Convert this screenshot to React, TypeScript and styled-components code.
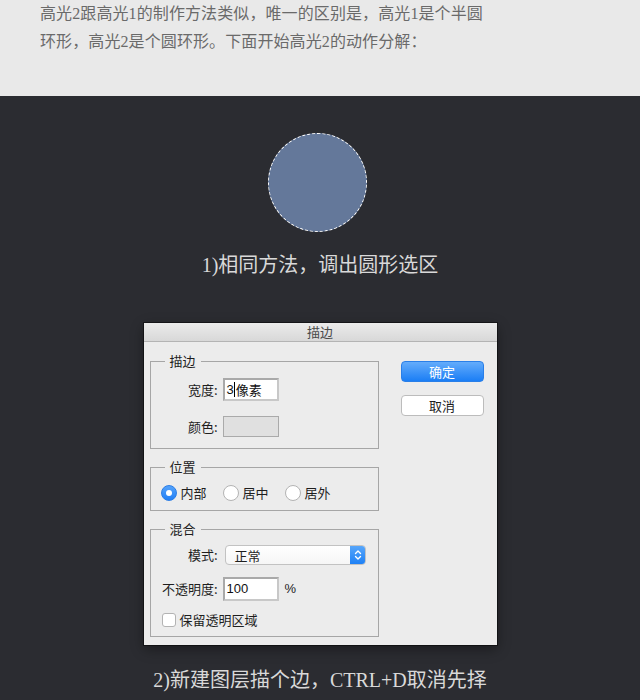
import React from 'react';
import styled, { createGlobalStyle } from 'styled-components';

const GlobalStyle = createGlobalStyle`
  html, body {
    margin: 0;
    padding: 0;
    background: #2b2c31;
  }
  * {
    box-sizing: border-box;
  }
`;

const Page = styled.div`
  width: 640px;
  height: 700px;
  overflow: hidden;
  display: flex;
  flex-direction: column;
`;

const Intro = styled.div`
  height: 96px;
  background: #e9e9e9;
  padding-left: 40px;
  font-family: 'Liberation Serif', 'Noto Sans CJK SC', serif;
  font-size: 16px;
  line-height: 28px;
  color: #6a6a6a;
  letter-spacing: 0.1px;
`;

const IntroLine = styled.div`
  white-space: nowrap;
`;

const Stage = styled.div`
  flex: 1;
  background: #2b2c31;
  display: flex;
  flex-direction: column;
  align-items: center;
  padding-top: 37px;
`;

const Selection = styled.div`
  width: 99px;
  height: 99px;
  border-radius: 50%;
  background: #64789a;
  border: 1px dashed #ffffff;
  margin-left: -5px;
`;

const Caption = styled.div<{ $top: number }>`
  margin-top: ${(p) => p.$top}px;
  font-family: 'Liberation Serif', 'Noto Sans CJK SC', serif;
  font-size: 20px;
  line-height: 24px;
  color: #d9d9d9;
  white-space: nowrap;
`;

const Dialog = styled.div`
  margin-top: 46px;
  width: 353px;
  height: 322px;
  background: #ececec;
  box-shadow: 0 0 0 1px rgba(0, 0, 0, 0.45), 0 4px 12px rgba(0, 0, 0, 0.4);
  font-family: 'Noto Sans CJK SC', 'Liberation Sans', sans-serif;
  font-size: 13px;
  line-height: 16px;
  color: #1e1e1e;
  display: flex;
  flex-direction: column;
`;

const TitleBar = styled.div`
  height: 19px;
  background: linear-gradient(#ebebeb, #d8d8d8);
  border-bottom: 1px solid #b4b4b4;
  text-align: center;
  font-size: 13px;
  line-height: 18px;
  color: #4a4a4a;
`;

const Body = styled.div`
  display: flex;
  padding: 11px 13px 0 6px;
  gap: 22px;
`;

const Groups = styled.div`
  width: 229px;
  display: flex;
  flex-direction: column;
  gap: 10px;
`;

const Group = styled.fieldset<{ $pt: number; $pb: number; $gap: number }>`
  margin: 0;
  border: 1px solid #a6a6a6;
  padding: ${(p) => p.$pt}px 0 ${(p) => p.$pb}px 0;
  display: flex;
  flex-direction: column;
  gap: ${(p) => p.$gap}px;
`;

const Legend = styled.legend`
  margin-left: 14px;
  padding: 0 5px;
  font-size: 13px;
  line-height: 16px;
`;

const Row = styled.div<{ $indent?: number }>`
  display: flex;
  align-items: center;
  padding-left: ${(p) => p.$indent ?? 0}px;
`;

const CheckRow = styled.label`
  display: flex;
  align-items: center;
  height: 14px;
  line-height: 14px;
  padding-left: 11px;
`;

const Label = styled.span`
  width: 67px;
  margin-right: 5px;
  text-align: right;
  white-space: nowrap;
`;

const TextBox = styled.div<{ $h: number }>`
  width: 56px;
  height: ${(p) => p.$h}px;
  background: #ffffff;
  border: 2px solid #a9a9a9;
  border-right-color: #c8c8c8;
  border-bottom-color: #c8c8c8;
  padding-left: 2px;
  display: flex;
  align-items: center;
  font-family: 'Liberation Sans', 'Noto Sans CJK SC', sans-serif;
  font-size: 13px;
  color: #111;
  white-space: nowrap;
`;

const Caret = styled.span`
  display: inline-block;
  width: 1px;
  height: 15px;
  background: #000;
  margin: 0 1px 0 0;
`;

const CjkText = styled.span`
  font-family: 'Noto Sans CJK SC', sans-serif;
`;

const Swatch = styled.div`
  width: 56px;
  height: 21px;
  background: #e0e0e0;
  border: 1px solid #aaaaaa;
`;

const RadioItem = styled.label`
  width: 62px;
  display: flex;
  align-items: center;
  gap: 4px;
`;

const RadioDot = styled.span<{ $on?: boolean }>`
  width: 16px;
  height: 16px;
  border-radius: 50%;
  display: flex;
  align-items: center;
  justify-content: center;
  background: ${(p) => (p.$on ? 'linear-gradient(#55a3fb, #2180f6)' : '#ffffff')};
  border: 1px solid ${(p) => (p.$on ? '#2a7de6' : '#b3b3b3')};
  &::after {
    content: '';
    display: ${(p) => (p.$on ? 'block' : 'none')};
    width: 6px;
    height: 6px;
    border-radius: 50%;
    background: #ffffff;
  }
`;

const Select = styled.div`
  margin-left: 2px;
  width: 141px;
  height: 20px;
  border: 1px solid #c2c2c2;
  border-radius: 4px;
  background: linear-gradient(#ffffff, #f6f6f6);
  display: flex;
  align-items: center;
  justify-content: space-between;
  padding-left: 9px;
  padding-top: 1px;
  overflow: hidden;
`;

const Stepper = styled.div`
  width: 16px;
  height: 20px;
  margin: -1px -1px 0 0;
  background: linear-gradient(#5aa8fb, #1c7ff5);
  border-radius: 0 4px 4px 0;
  display: flex;
  align-items: center;
  justify-content: center;
`;

const Percent = styled.span`
  margin-left: 6px;
  font-family: 'Liberation Sans', sans-serif;
`;

const Check = styled.span`
  width: 14px;
  height: 14px;
  border: 1px solid #b3b3b3;
  border-radius: 3px;
  background: #ffffff;
  margin-right: 4px;
`;

const Buttons = styled.div`
  display: flex;
  flex-direction: column;
  gap: 13px;
  padding-top: 8px;
`;

const Button = styled.div<{ $primary?: boolean }>`
  width: 83px;
  height: 21px;
  border-radius: 4px;
  display: flex;
  align-items: center;
  justify-content: center;
  font-size: 13px;
  color: ${(p) => (p.$primary ? '#ffffff' : '#1e1e1e')};
  background: ${(p) => (p.$primary ? 'linear-gradient(#64acfb, #1b7ef5)' : '#ffffff')};
  border: 1px solid ${(p) => (p.$primary ? '#2a7fe8' : '#bcbcbc')};
`;

export default function App() {
  return (
    <Page>
      <GlobalStyle />
      <Intro>
        <IntroLine>高光2跟高光1的制作方法类似，唯一的区别是，高光1是个半圆</IntroLine>
        <IntroLine>环形，高光2是个圆环形。下面开始高光2的动作分解：</IntroLine>
      </Intro>
      <Stage>
        <Selection />
        <Caption $top={21}>1)相同方法，调出圆形选区</Caption>
        <Dialog>
          <TitleBar>描边</TitleBar>
          <Body>
            <Groups>
              <Group $pt={9} $pb={11} $gap={15}>
                <Legend>描边</Legend>
                <Row>
                  <Label>宽度:</Label>
                  <TextBox $h={23}>
                    3<Caret />
                    <CjkText>像素</CjkText>
                  </TextBox>
                </Row>
                <Row>
                  <Label>颜色:</Label>
                  <Swatch />
                </Row>
              </Group>
              <Group $pt={10} $pb={9} $gap={0}>
                <Legend>位置</Legend>
                <Row $indent={10}>
                  <RadioItem>
                    <RadioDot $on />
                    内部
                  </RadioItem>
                  <RadioItem>
                    <RadioDot />
                    居中
                  </RadioItem>
                  <RadioItem>
                    <RadioDot />
                    居外
                  </RadioItem>
                </Row>
              </Group>
              <Group $pt={8} $pb={9} $gap={12}>
                <Legend>混合</Legend>
                <Row>
                  <Label>模式:</Label>
                  <Select>
                    正常
                    <Stepper>
                      <svg width="8" height="12" viewBox="0 0 8 12" fill="none">
                        <path d="M1.5 4.5 L4 2 L6.5 4.5" stroke="#fff" strokeWidth="1.4" strokeLinecap="round" strokeLinejoin="round" />
                        <path d="M1.5 7.5 L4 10 L6.5 7.5" stroke="#fff" strokeWidth="1.4" strokeLinecap="round" strokeLinejoin="round" />
                      </svg>
                    </Stepper>
                  </Select>
                </Row>
                <Row>
                  <Label>不透明度:</Label>
                  <TextBox $h={24}>100</TextBox>
                  <Percent>%</Percent>
                </Row>
                <CheckRow>
                  <Check />
                  保留透明区域
                </CheckRow>
              </Group>
            </Groups>
            <Buttons>
              <Button $primary>确定</Button>
              <Button>取消</Button>
            </Buttons>
          </Body>
        </Dialog>
        <Caption $top={23}>2)新建图层描个边，CTRL+D取消先择</Caption>
      </Stage>
    </Page>
  );
}
